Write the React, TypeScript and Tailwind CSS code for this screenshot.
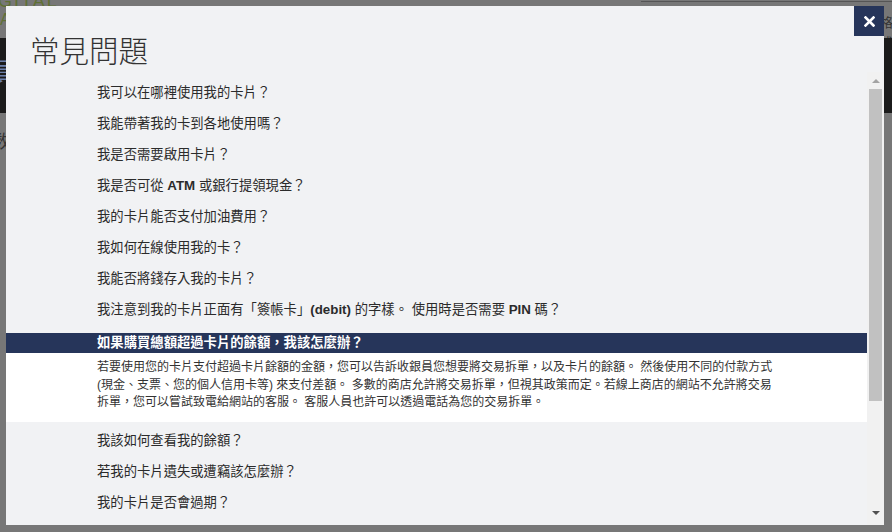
import React from "react";

const font = { fontFamily: '"Liberation Sans", "Noto Sans CJK TC", sans-serif' };

function Q({ children }: { children: React.ReactNode }) {
  return (
    <div className="h-[31px] flex items-center pl-[91px] text-[13.33px] text-[#2b2b2b] whitespace-nowrap">
      <span>{children}</span>
    </div>
  );
}

export default function App() {
  return (
    <div className="relative w-[892px] h-[532px] overflow-hidden bg-[#777777]" style={font}>
      {/* background page (dimmed) */}
      <div className="flex flex-col w-full h-full">
        <div className="relative h-[38px]">
          <div className="absolute left-[641px] right-0 top-[1px] h-[1px] bg-[#555555]" />
          <div className="absolute left-[-2px] top-[-8px] text-[18px] leading-[18px] tracking-[2px] text-[#5f7034]">GITAL</div>
          <div className="absolute left-[0px] top-[12px] text-[16px] leading-[16px] text-[#5f7034]">A</div>
          <div className="absolute left-[880px] top-[13px] text-[13px] text-[#333333]">格式</div>
        </div>
        <div className="h-[75px] bg-[#1b1b1b] relative">
          <div className="absolute left-[-8px] top-[16px] text-[26px] text-[#6c7fa8]">員</div>
        </div>
        <div className="relative flex-1">
          <div className="absolute left-[-8px] top-[16px] text-[18px] text-[#333333]">数</div>
        </div>
      </div>

      {/* modal */}
      <div className="absolute left-[6px] top-[6px] w-[878px] h-[519px] bg-[#f1f2f4] flex flex-col">
        <div className="h-[66px] pl-[24px] pt-[26px] shrink-0">
          <h1 className="text-[29.5px] leading-[40px] font-light text-[#333333]">常見問題</h1>
        </div>
        <div className="flex-1 flex min-h-0">
          <div className="flex-1 overflow-hidden pt-[5px]">
            <Q>我可以在哪裡使用我的卡片？</Q>
            <Q>我能帶著我的卡到各地使用嗎？</Q>
            <Q>我是否需要啟用卡片？</Q>
            <Q>
              {"我是否可從 "}<b className="font-bold">ATM</b>{" 或銀行提領現金？"}
            </Q>
            <Q>我的卡片能否支付加油費用？</Q>
            <Q>我如何在線使用我的卡？</Q>
            <Q>我能否將錢存入我的卡片？</Q>
            <Q>
              {"我注意到我的卡片正面有「簽帳卡」"}<b className="font-bold">(debit)</b>{" 的字樣。 使用時是否需要 "}<b className="font-bold">PIN</b>{" 碼？"}
            </Q>
            <div className="mt-[8px] h-[20px] bg-[#26355a] pl-[91px] flex items-center text-[13.33px] font-bold text-white whitespace-nowrap">
              <span>如果購買總額超過卡片的餘額，我該怎麼辦？</span>
            </div>
            <div className="bg-white pl-[91px] pt-[6px] pb-[10px] text-[12px] leading-[17.5px] text-[#333333] whitespace-nowrap">
              <div>若要使用您的卡片支付超過卡片餘額的金額，您可以告訴收銀員您想要將交易拆單，以及卡片的餘額。 然後使用不同的付款方式</div>
              <div>(現金、支票、您的個人信用卡等) 來支付差額。 多數的商店允許將交易拆單，但視其政策而定。若線上商店的網站不允許將交易</div>
              <div>拆單，您可以嘗試致電給網站的客服。 客服人員也許可以透過電話為您的交易拆單。</div>
            </div>
            <div className="mt-[4px]">
              <Q>我該如何查看我的餘額？</Q>
              <Q>若我的卡片遺失或遭竊該怎麼辦？</Q>
              <Q>我的卡片是否會過期？</Q>
            </div>
          </div>
          {/* scrollbar */}
          <div className="w-[17px] shrink-0 bg-[#f1f1f1] flex flex-col">
            <div className="h-[17px] flex items-center justify-center">
              <svg width="8" height="4" viewBox="0 0 8 4"><path d="M0 4 L4 0 L8 4 Z" fill="#a3a3a3" /></svg>
            </div>
            <div className="ml-[2px] w-[13px] h-[312px] bg-[#c1c1c1]" />
            <div className="flex-1" />
            <div className="h-[17px] mb-[4px] flex items-center justify-center">
              <svg width="8" height="4" viewBox="0 0 8 4"><path d="M0 0 L8 0 L4 4 Z" fill="#505050" /></svg>
            </div>
          </div>
        </div>
        <button className="absolute right-0 top-0 w-[30px] h-[30px] bg-[#26355a] flex items-center justify-center">
          <svg width="11" height="11" viewBox="0 0 11 11">
            <path d="M1.5 1.5 L9.5 9.5 M9.5 1.5 L1.5 9.5" stroke="white" strokeWidth="2.6" strokeLinecap="square" />
          </svg>
        </button>
      </div>
    </div>
  );
}
